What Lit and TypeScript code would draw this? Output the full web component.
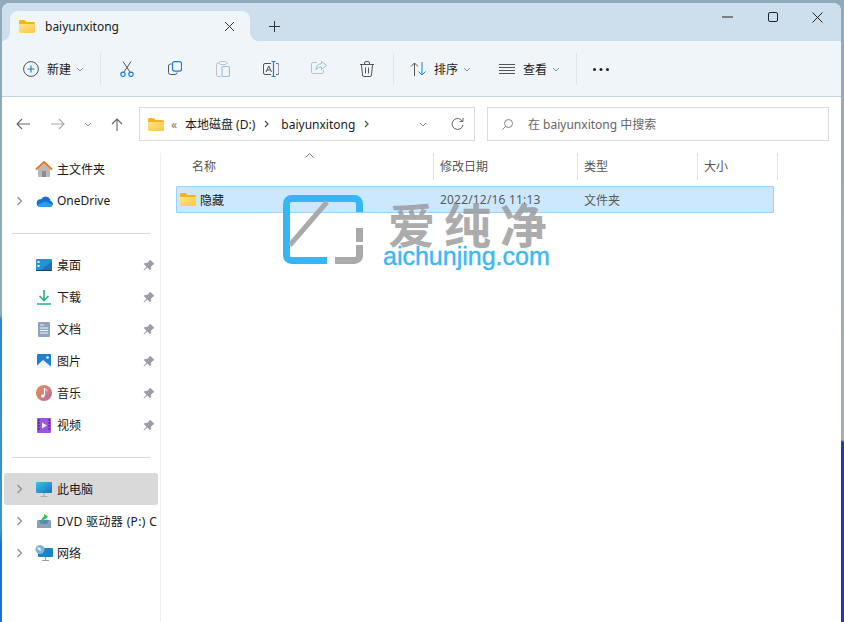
import { LitElement, html, css, svg } from "lit";
import { customElement } from "lit/decorators.js";

const ic = (w: number, h: number, body: unknown) =>
  html`<svg class="ic" width=${w} height=${h} viewBox="0 0 ${w} ${h}" fill="none">${body}</svg>`;

const folder = ic(16, 13, svg`
  <defs><linearGradient id="fg" x1="0" y1="0" x2="1" y2="1"><stop offset="0" stop-color="#ffe38a"/><stop offset="1" stop-color="#fcc73f"/></linearGradient></defs>
  <path d="M0 1.5C0 .7.7 0 1.5 0h4L7.5 2H14.5c.8 0 1.5.7 1.5 1.5V5H0z" fill="#f5b31c"/>
  <path d="M0 4h16v7.5c0 .8-.7 1.5-1.5 1.5h-13C.7 13 0 12.300 0 11.500z" fill="url(#fg)"/>`);

const chevD = html`<svg class="ic" width="8" height="5" viewBox="0 0 8 5" fill="none"><path d="M1 1l3 3 3-3" stroke="#8a8a8a" stroke-width="1"/></svg>`;
const chevR = html`<svg class="ic" width="7" height="10" viewBox="0 0 7 10" fill="none"><path d="M1.500 1l4 4-4 4" stroke="#8f8f8f" stroke-width="1.300"/></svg>`;
const crumbChev = html`<svg class="ic" width="5" height="8" viewBox="0 0 5 8" fill="none"><path d="M1 1l3 3-3 3" stroke="#555" stroke-width="1.300"/></svg>`;
const pin = html`<svg class="ic" width="12" height="12" viewBox="0 0 12 12"><path d="M7 .5l4.500 4.500-1.200.6-2 2 -.4 2.600-1 1L4.300 8.600 1 11.500.5 11l2.900-3.300L.8 5.100l1-1 2.600-.4 2-2z" fill="#9aa0a6"/></svg>`;

const navIcons: Record<string, unknown> = {
  home: ic(18, 16, svg`<path d="M3 8l6-5.500L15 8v8H3z" fill="#b9b9b9"/><path d="M7 10h4v6H7z" fill="#8d8d8d"/><path d="M1 8.500L9 1l8 7.500" stroke="#e8791f" stroke-width="2" fill="none"/>`),
  cloud: ic(17, 11, svg`<path d="M4 11h10a3 3 0 0 0 .6-5.900A5 5 0 0 0 5.200 3.300 3.800 3.800 0 0 0 4 11z" fill="#1572cf"/><path d="M3 11h11a3 3 0 0 0 2.500-2.500L9 5.500 1 9z" fill="#2b9df0"/>`),
  desktop: ic(16, 12, svg`<rect width="16" height="12" rx="1" fill="#1e95d4"/><path d="M16 2v9a1 1 0 0 1-1 1H4z" fill="#2370b5"/><rect x="1.500" y="2" width="2" height="2" fill="#e8f6fc"/><rect x="1.500" y="6" width="2" height="2" fill="#e8f6fc"/><rect y="11" width="16" height="1" fill="#16466f"/>`),
  down: ic(14, 15, svg`<path d="M7 0v10M2.500 6l4.500 4.500L11.500 6" stroke="#1fb58f" stroke-width="1.600"/><path d="M0 14h14" stroke="#1fb58f" stroke-width="1.600"/>`),
  doc: ic(12, 15, svg`<rect width="12" height="15" rx="1" fill="#8fa5bf"/><path d="M2 3h4M2 6h8M2 8.500h8M2 11h8" stroke="#eef3f8" stroke-width="1"/>`),
  pic: ic(14, 14, svg`<rect width="14" height="14" rx="1" fill="#1f7fd0"/><circle cx="10.500" cy="3.500" r="1.300" fill="#fff"/><path d="M0 14V11.500L6 6l8 6.500V14z" fill="#eaf4fb"/>`),
  music: ic(16, 16, svg`<defs><linearGradient id="mg" x1="0" y1="0" x2="1" y2="1"><stop offset="0" stop-color="#ef8f4e"/><stop offset="1" stop-color="#b86aa8"/></linearGradient></defs><circle cx="8" cy="8" r="8" fill="url(#mg)"/><path d="M8.500 3v7.500" stroke="#fff" stroke-width="1.300"/><path d="M8.500 3.200c1 1.600 2.500 1.400 2.500 3" stroke="#fff" stroke-width="1"/><circle cx="6.800" cy="11" r="1.800" fill="#fff"/>`),
  video: ic(14, 15, svg`<rect width="14" height="15" rx="1" fill="#9a55e0"/><path d="M5 4.500v6l5-3z" fill="#f2e8fc"/><path d="M1 2h1.500M1 5h1.500M1 8h1.500M1 11h1.500M11.500 2H13M11.500 5H13M11.500 8H13M11.500 11H13" stroke="#3d2470" stroke-width="1.300"/>`),
  pc: ic(16, 15, svg`<defs><linearGradient id="pg" x1="0" y1="0" x2="1" y2="1"><stop offset="0" stop-color="#33c7e0"/><stop offset="1" stop-color="#1a6fbf"/></linearGradient></defs><rect width="16" height="11" rx="1" fill="url(#pg)"/><path d="M8 11v3M4.500 14.500h7" stroke="#9fb0bc" stroke-width="1.200"/>`),
  dvd: ic(14, 15, svg`<path d="M1 6h12l1 1v7H0V7z" fill="#8ea0b8"/><path d="M2 6h10l-2 4H4z" fill="#5f7fc8"/><path d="M5 9c0-3 1-5 3.500-6" stroke="#2cc24b" stroke-width="2.200"/><path d="M7 0l4 2.500L7.500 6z" fill="#2cc24b"/>`),
  net: ic(18, 16, svg`<rect x="3" y="3" width="15" height="9" rx="1" fill="#1a85c6"/><path d="M10.500 12v3M7 15.500h7" stroke="#8ea2b0" stroke-width="1.200"/><circle cx="5" cy="4.500" r="4.500" fill="#7fb4dc"/><path d="M2 3c2-1 3 0 4 1s-1 2-2 1" fill="#e4f0f8"/>`),
};

const navGroups = [
  [
    { i: "home", t: "主文件夹" },
    { i: "cloud", t: "OneDrive", arrow: true },
  ],
  [
    { i: "desktop", t: "桌面", pin: true },
    { i: "down", t: "下载", pin: true },
    { i: "doc", t: "文档", pin: true },
    { i: "pic", t: "图片", pin: true },
    { i: "music", t: "音乐", pin: true },
    { i: "video", t: "视频", pin: true },
  ],
  [
    { i: "pc", t: "此电脑", arrow: true, sel: true },
    { i: "dvd", t: "DVD 驱动器 (P:) CD", arrow: true, wide: true },
    { i: "net", t: "网络", arrow: true },
  ],
] as { i: string; t: string; arrow?: boolean; pin?: boolean; sel?: boolean; wide?: boolean }[][];

const tools = [
  ic(14, 16, svg`<path d="M3 .5l7 10.500M11 .5L4 11" stroke="#555" stroke-width="1"/><circle cx="3" cy="13.300" r="2.200" stroke="#1b7fd6" stroke-width="1.200"/><circle cx="11" cy="13.300" r="2.200" stroke="#1b7fd6" stroke-width="1.200"/>`),
  ic(14, 14, svg`<rect x="4.500" y=".6" width="9" height="9.500" rx="2" stroke="#1b7fd6" stroke-width="1.200"/><path d="M3.500 3H2.500a2 2 0 0 0-2 2v6.500a2 2 0 0 0 2 2H7a2 2 0 0 0 2-2" stroke="#555" stroke-width="1"/>`),
  ic(14, 16, svg`<path d="M3.500 2H2A1.500 1.500 0 0 0 .5 3.500v11A1.500 1.500 0 0 0 2 15.500h3.500M10.500 2H12" stroke="#b9c2ca" stroke-width="1"/><rect x="3.500" y=".5" width="7" height="3" rx="1" stroke="#b9c2ca"/><rect x="6" y="5.500" width="7.500" height="10" rx="1.500" stroke="#8cc0ea" stroke-width="1.100"/>`),
  ic(16, 16, svg`<path d="M8 2.500H2A1.500 1.500 0 0 0 .5 4v8A1.500 1.500 0 0 0 2 13.500h6M13 2.500h1.500A1.500 1.500 0 0 1 16 4v8a1.500 1.500 0 0 1-1.500 1.500H13" stroke="#555"/><path d="M3 11L5.800 5 8.500 11M4 9h3.500" stroke="#555"/><path d="M10.500 .5v15M8.500 .5h4M8.500 15.500h4" stroke="#1b7fd6" stroke-width="1.200"/>`),
  ic(16, 14, svg`<path d="M6 1.500H2A1.500 1.500 0 0 0 .5 3v8A1.500 1.500 0 0 0 2 12.500h9a1.500 1.500 0 0 0 1.500-1.500V9" stroke="#b9c2ca"/><path d="M10.500 .5l5 4-5 4V6C8 6 6 7 5 9c0-4 2-6 5.500-6.500z" stroke="#8cc0ea"/>`),
  ic(14, 16, svg`<path d="M0 3.500h14M4.500 3V2a1.500 1.500 0 0 1 1.500-1.500h2A1.500 1.500 0 0 1 9.500 2v1M1.500 4l1 10a1.500 1.500 0 0 0 1.500 1.500h6a1.500 1.500 0 0 0 1.500-1.500l1-10M5.500 6.500v6M8.500 6.500v6" stroke="#555"/>`),
];

@customElement("app-root")
export class AppRoot extends LitElement {
  static styles = css`
    :host { display: block; width: 844px; height: 622px; position: relative; overflow: hidden;
      background:
        linear-gradient(#8fa9bd 0, #8fa9bd 315px, #2d86cc 320px, #3f95c9 530px, #1a6fdc 545px, #1a6fdc 622px) left top / 4px 100% no-repeat,
        linear-gradient(#8fa9bd 0, #a0b0bc 440px, #1c3fa0 442px, #1c3fa0 622px) right top / 4px 100% no-repeat,
        #8fa9bd;
      font: 12px "Noto Sans", "Noto Sans CJK SC", sans-serif; color: #1a1a1a; }
    .ic { display: block; flex: none; }
    .window { position: absolute; left: 2px; top: 3px; width: 839px; height: 619px; background: #fff;
      border-radius: 8px 8px 0 0; overflow: hidden; display: flex; flex-direction: column; }
    .tabbar { height: 38px; background: #cddeec; display: flex; padding-left: 8px; flex: none; }
    .tab { width: 240px; margin-top: 8px; background: #f0f5f9; border-radius: 8px 8px 0 0; position: relative;
      display: flex; align-items: center; padding: 0 0 0 9px; box-sizing: border-box; gap: 10px; height: 30px; }
    .tab::before, .tab::after { content: ""; position: absolute; bottom: 0; width: 8px; height: 8px; }
    .tab::before { left: -8px; background: radial-gradient(circle at 0 0, transparent 7.5px, #f0f5f9 8px); }
    .tab::after { right: -8px; background: radial-gradient(circle at 100% 0, transparent 7.5px, #f0f5f9 8px); }
    .tab .name { flex: 1; color: #1a1a1a; }
    .x { width: 42px; display: flex; justify-content: center; }
    .plus { width: 48px; margin-top: 8px; display: flex; align-items: center; justify-content: center; }
    .caps { margin-left: auto; display: flex; height: 28px; align-items: center; padding-right: 1px; }
    .cap { width: 45px; display: flex; justify-content: center; }
    .toolbar { height: 56px; background: #f0f5f9; border-bottom: 1px solid #c3d3e0; display: flex;
      align-items: center; flex: none; box-sizing: border-box; padding: 1px 0 0 10px; }
    .new { display: flex; align-items: center; width: 88px; padding-left: 11px; box-sizing: border-box; }
    .new svg:first-child { margin-right: 8px; }
    .lbl { margin-right: 5px; }
    .sep { width: 1px; height: 32px; background: #dfe4e8; flex: none; }
    .tools { display: flex; padding: 0 2px; flex: none; }
    .tb { width: 48px; display: flex; justify-content: center; flex: none; }
    .menu { display: flex; align-items: center; flex: none; }
    .sort { width: 90px; padding-left: 16px; box-sizing: border-box; }
    .view { width: 92px; padding-left: 15px; box-sizing: border-box; }
    .menu svg:first-child { margin-right: 7px; }
    .view svg:first-child { margin-right: 8px; }
    .dots { margin-left: 16px; }
    .navrow { height: 56px; display: flex; align-items: center; flex: none; box-sizing: border-box; padding-bottom: 2px; }
    .navbtn { display: flex; justify-content: center; flex: none; }
    .nb1 { width: 38px; margin-left: 2px; } .nb2 { width: 32px; } .nb3 { width: 28px; } .nb4 { width: 30px; }
    .addr, .search { height: 34px; border: 1px solid #dcdcdc; box-sizing: border-box; display: flex; align-items: center; background: #fff; }
    .addr { width: 336px; margin-left: 7px; padding-left: 8px; }
    .crumb { margin-left: 5px; }
    .laq { margin-left: 7px; color: #777; font-size: 12px; width: 9px; }
    .ca { margin: 0 0 0 9px; } .cb { margin-left: 12px; }
    .caD { margin-left: auto; } .ref { margin: 0 10px 0 24px; }
    .search { width: 342px; margin-left: 12px; padding-left: 14px; color: #666; gap: 15px; }
    .body { flex: 1; display: flex; min-height: 0; }
    .side { width: 158px; border-right: 1px solid #f0f0f0; flex: none; }
    .group { display: flex; flex-direction: column; }
    .divider { height: 1px; background: #d9d9d9; margin: 16px 10px 15px 10px; width: 138px; }
    .row { height: 32px; display: flex; align-items: center; margin: 0 0 0 2px; width: 154px; border-radius: 3px; box-sizing: border-box; white-space: nowrap; overflow: hidden; }
    .row.sel { background: #d9d9d9; }
    .arrow { width: 10px; margin-left: 12px; flex: none; }
    .iconbox { width: 20px; margin-left: 8px; display: flex; justify-content: center; flex: none; margin-right: 3px; }
    .row .t { flex: 1; overflow: hidden; padding-bottom: 1px; margin-right: 1px; }
    .row .t.wide { letter-spacing: .35px; }
    .pin { margin-right: 3px; }
    .files { flex: 1; position: relative; padding-left: 15px; }
    .head { display: grid; grid-template-columns: 258px 144px 120px 80px; height: 27px; position: relative; }
    .hc { border-right: 1px solid #e2e2e2; padding: 0 0 1px 16px; display: flex; align-items: center; color: #555; box-sizing: border-box; }
    .hc.next { padding-left: 6px; }
    .caret { position: absolute; left: 129px; top: 0; }
    .frow { margin-top: 6px; width: 598px; height: 27px; box-sizing: border-box; background: #cce8ff; border: 1px solid #99d1ff; border-radius: 1px;
      display: grid; grid-template-columns: 257px 144px 1fr; align-items: center; color: #5a5a5a; }
    .fname { display: flex; align-items: center; gap: 4px; color: #1a1a1a; padding-left: 3px; }
    .date { padding-left: 6px; letter-spacing: .18px; }
    .ftype { padding-left: 6px; }
    .mark { position: absolute; left: 281px; top: 192px; width: 280px; height: 80px; display: flex; gap: 23px; pointer-events: none; }
    .mtext { display: flex; flex-direction: column; }
    .cn { font: 700 47px/47px "Noto Sans CJK SC", sans-serif; color: rgba(150,150,150,.8); letter-spacing: 9px; height: 44px; margin-top: 4px; white-space: nowrap; }
    .en { font: 400 25px/26px "Liberation Sans", sans-serif; color: #3bb8f5; -webkit-text-stroke: .4px #3bb8f5; margin-left: -5px; }
  `;

  render() {
    return html`
      <div class="window">
        <div class="tabbar">
          <div class="tab">${folder}<span class="name">baiyunxitong</span>
            <span class="x">${ic(11, 11, svg`<path d="M1 1l9 9M10 1l-9 9" stroke="#333"/>`)}</span></div>
          <div class="plus">${ic(11, 11, svg`<path d="M5.500 0v11M0 5.500h11" stroke="#333"/>`)}</div>
          <div class="caps">
            <span class="cap">${ic(11, 2, svg`<path d="M0 1h11" stroke="#222"/>`)}</span>
            <span class="cap">${ic(10, 10, svg`<rect x=".5" y=".5" width="9" height="9" rx="1.500" stroke="#222"/>`)}</span>
            <span class="cap">${ic(11, 11, svg`<path d="M.5.5l10 10M10.500.5l-10 10" stroke="#222"/>`)}</span>
          </div>
        </div>
        <div class="toolbar">
          <div class="new">
            ${ic(16, 16, svg`<circle cx="8" cy="8" r="7.400" stroke="#555"/><path d="M8 4.500v7M4.500 8h7" stroke="#1b7fd6" stroke-width="1.200"/>`)}
            <span class="lbl">新建</span>${chevD}
          </div>
          <div class="sep"></div>
          <div class="tools">${tools.map((t) => html`<div class="tb">${t}</div>`)}</div>
          <div class="sep"></div>
          <div class="menu sort">
            ${ic(17, 14, svg`<path d="M4.500 14V1M1 4.500L4.500 1 8 4.500" stroke="#555"/><path d="M12 0v13M8.500 9.500L12 13l3.500-3.500" stroke="#1b7fd6"/>`)}
            <span class="lbl">排序</span>${chevD}
          </div>
          <div class="menu view">
            ${ic(16, 10, svg`<path d="M0 .5h16M0 3.500h16M0 6.500h16M0 9.500h16" stroke="#555"/>`)}
            <span class="lbl">查看</span>${chevD}
          </div>
          <div class="sep"></div>
          <div class="dots">${ic(16, 3, svg`<circle cx="1.500" cy="1.500" r="1.500" fill="#222"/><circle cx="8" cy="1.500" r="1.500" fill="#222"/><circle cx="14.500" cy="1.500" r="1.500" fill="#222"/>`)}</div>
        </div>
        <div class="navrow">
          <span class="navbtn nb1">${ic(14, 12, svg`<path d="M14 6H1M6 1L1 6l5 5" stroke="#666" stroke-width="1.100"/>`)}</span>
          <span class="navbtn nb2">${ic(14, 12, svg`<path d="M0 6h13M8 1l5 5-5 5" stroke="#aaa" stroke-width="1.100"/>`)}</span>
          <span class="navbtn nb3">${chevD}</span>
          <span class="navbtn nb4">${ic(12, 13, svg`<path d="M6 13V1M1 6l5-5 5 5" stroke="#666" stroke-width="1.100"/>`)}</span>
          <div class="addr">
            ${folder}
            <span class="laq">«</span>
            <span class="crumb">本地磁盘 (D:)</span>
            <span class="ca">${crumbChev}</span>
            <span class="cb">baiyunxitong</span>
            <span class="ca">${crumbChev}</span>
            <span class="caD">${chevD}</span>
            <span class="ref">${ic(13, 13, svg`<path d="M11.500 3.500A5.500 5.500 0 1 0 12 7" stroke="#666"/><path d="M8.500 3.500h3.500V0" stroke="#666"/>`)}</span>
          </div>
          <div class="search">
            ${ic(11, 11, svg`<circle cx="6.500" cy="4.500" r="4" stroke="#888"/><path d="M3.500 7.500L.5 10.500" stroke="#888"/>`)}
            <span>在 baiyunxitong 中搜索</span>
          </div>
        </div>
        <div class="body">
          <div class="side">
            ${navGroups.map((g, idx) => html`
              ${idx > 0 ? html`<div class="divider"></div>` : ""}
              <div class="group">
                ${g.map((r) => html`
                  <div class="row ${r.sel ? "sel" : ""}">
                    <span class="arrow">${r.arrow ? chevR : ""}</span>
                    <span class="iconbox">${navIcons[r.i]}</span>
                    <span class="t ${r.wide ? "wide" : ""}">${r.t}</span>
                    ${r.pin ? html`<span class="pin">${pin}</span>` : ""}
                  </div>`)}
              </div>`)}
          </div>
          <div class="files">
            <div class="head">
              <div class="hc">名称</div>
              <div class="hc next">修改日期</div>
              <div class="hc next">类型</div>
              <div class="hc next">大小</div>
              <span class="caret">${ic(9, 5, svg`<path d="M.5 4.500l4-4 4 4" stroke="#777"/>`)}</span>
            </div>
            <div class="frow">
              <div class="fname">${folder}<span>隐藏</span></div>
              <div class="date">2022/12/16 11:13</div>
              <div class="ftype">文件夹</div>
            </div>
          </div>
        </div>
        <div class="mark">
          <svg class="ic" width="82" height="70" viewBox="0 0 82 70" fill="none">
            <path d="M76.500 17V8.500a5 5 0 0 0-5-5H8.500a5 5 0 0 0-5 5V60.500a5 5 0 0 0 5 5H44" stroke="#36b6f3" stroke-width="7"/>
            <path d="M44 7L7 50" stroke="#aaa" stroke-width="5"/>
            <path d="M76.500 33v14" stroke="#aaa" stroke-width="7"/>
            <path d="M52 65.500h19.500a5 5 0 0 0 5-5V50" stroke="#aaa" stroke-width="7"/>
          </svg>
          <div class="mtext">
            <span class="cn">爱纯净</span>
            <span class="en">aichunjing.com</span>
          </div>
        </div>
      </div>
    `;
  }
}
